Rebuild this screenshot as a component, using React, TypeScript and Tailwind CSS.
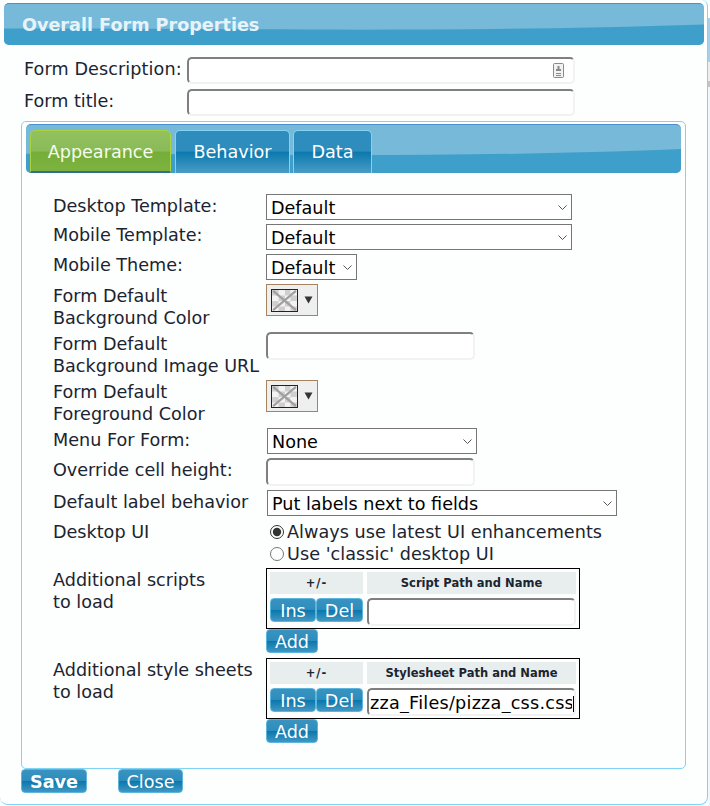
function Gloss() {
  // curved lower half of the glossy header
  return (
    <svg className="absolute inset-0 h-full w-full" viewBox="0 0 100 100" preserveAspectRatio="none">
      <path d="M0 60 C 30 58, 60 72, 100 50 L100 100 L0 100 Z" fill="#3f9fcb" />
    </svg>
  )
}

function TextBox({ className = "", value = "" }: { className?: string; value?: string }) {
  return (
    <input
      readOnly
      value={value}
      className={`rounded-[5px] border-2 border-t-[#7f7f7f] border-l-[#7f7f7f] border-r-[#f2f2f2] border-b-[#f2f2f2] bg-white pl-px pr-0.5 text-[17.6px] text-black outline-none ${className}`}
    />
  )
}

function Select({ value, className = "" }: { value: string; className?: string }) {
  return (
    <div className={`relative h-[26px] ${className}`}>
      <select className="h-full w-full appearance-none border border-[#767676] bg-white pl-[4px] text-[17.6px] text-black">
        <option>{value}</option>
      </select>
      <svg width="9" height="5" viewBox="0 0 9 5" className="pointer-events-none absolute top-[11px] right-[5px]">
        <path d="M0.5 0.5L4.5 4.5L8.5 0.5" fill="none" stroke="#555" />
      </svg>
    </div>
  )
}

function BlueButton({ children, className = "" }: { children: React.ReactNode; className?: string }) {
  return (
    <button className={`flex h-[24px] items-center justify-center rounded-[4px] border border-[#5bb5dc] bg-[linear-gradient(#3a93c0_0%,#2d8cbc_50%,#0a78ae_52%,#4197c2_100%)] pt-[4px] text-[17.6px] leading-none text-white ${className}`}>
      {children}
    </button>
  )
}

function Swatch() {
  return (
    <div className="flex h-[32px] w-[52px] items-center gap-[6px] border border-[#a5835f] bg-[#efefef] pl-[4px]">
      <svg width="27" height="23" viewBox="0 0 27 23" className="border border-[#222]">
        <rect width="27" height="23" fill="#f2f2f2" />
        <path d="M0 0h7v6H0zM14 0h6v6h-6zM7 6h7v6H7zM20 6h7v6h-7zM0 12h7v6H0zM14 12h6v6h-6zM7 18h7v5H7zM20 18h7v5h-7z" fill="#cfcfcf" />
        <path d="M1 1L26 22M26 1L1 22" stroke="#a0a0a0" strokeWidth="2.4" />
      </svg>
      <svg width="9" height="8" viewBox="0 0 9 8">
        <path d="M0.5 0.5h8L4.5 7.5z" fill="#333" />
      </svg>
    </div>
  )
}

function Row({ label, className = "", labelClass = "pt-px", children }: { label: React.ReactNode; className?: string; labelClass?: string; children: React.ReactNode }) {
  return (
    <div className={`flex ${className}`}>
      <div className={`w-[213px] shrink-0 whitespace-nowrap leading-[22px] ${labelClass}`}>{label}</div>
      <div className="min-w-0">{children}</div>
    </div>
  )
}

function PathTable({ heading, value, caret }: { heading: string; value?: string; caret?: boolean }) {
  return (
    <div className="w-[314px] border border-black px-[3px] pt-[3px]">
      <div className="flex gap-[4px]">
        <div className="flex h-[22px] w-[93px] items-center justify-center bg-[#e8eeee] pt-[2px] text-[11.5px] font-bold tracking-[1px]">+/-</div>
        <div className="flex h-[22px] w-[209px] items-center justify-center bg-[#e8eeee] pt-[2px] text-[11.5px] font-bold">{heading}</div>
      </div>
      <div className="mt-[4px] flex gap-[4px] pb-[2px]">
        <div className="flex w-[93px]">
          <BlueButton className="w-[46px]">Ins</BlueButton>
          <BlueButton className="w-[47px]">Del</BlueButton>
        </div>
        <div className="relative">
          <TextBox value={value} className="h-[28px] w-[209px] pt-px tracking-[0.25px]" />
          {caret && <div className="absolute top-[8px] right-[2px] h-[16px] w-px bg-black" />}
        </div>
      </div>
    </div>
  )
}

const tabBlue = "flex h-[43px] items-center justify-center rounded-t-[5px] border border-b-0 border-[#7fd4f5] bg-[linear-gradient(#2f8dbd_0%,#2f8dbd_48%,#0a78ae_50%,#4a9cc6_100%)] text-white"

export default function App() {
  return (
    <div className="flex h-[806px] w-[710px] overflow-hidden bg-[#fdfefe] font-['DejaVu_Sans',sans-serif] text-[17.6px] text-[#1b2430]">
      <div className="h-[805px] w-[708px] shrink-0 rounded-tr-[6px] rounded-b-[8px] border-r border-b border-[#7fd4f5] px-[4px] pt-[3px]">
        <div className="relative h-[42px] w-[700px] overflow-hidden rounded-[5px] border-t border-[#4a90d0] bg-[#76b9d9]">
          <Gloss />
          <div className="relative pl-[18px] pt-[10px] text-[17.6px] font-bold leading-[22px] text-[#e6f4fa]">Overall Form Properties</div>
        </div>

        <div className="mt-[12px] ml-[20px] flex">
          <div className="w-[163px] whitespace-nowrap pt-[1px] leading-[22px] tracking-[0.1px]">Form Description:</div>
          <div className="relative">
            <TextBox className="h-[27px] w-[388px]" />
            <svg width="11" height="15" viewBox="0 0 11 15" className="absolute top-[6px] right-[11px]">
              <rect x="0.5" y="0.5" width="10" height="14" rx="1" fill="#f2f2f2" stroke="#8a8a8a" />
              <path d="M4.5 3h2v3h1.5v2H3V6h1.5zM3 10h5v1H3zM3 12h5v1H3z" fill="#8a8a8a" />
            </svg>
          </div>
        </div>
        <div className="mt-[5px] ml-[20px] flex">
          <div className="w-[163px] pt-[1px] leading-[22px]">Form title:</div>
          <TextBox className="h-[27px] w-[388px]" />
        </div>

        <div className="mt-[5px] ml-[17px] h-[648px] w-[665px] rounded-[5px] border border-[#7fd4f5] px-[4px] pt-[2px]">
          <div className="relative h-[49px] overflow-hidden rounded-[5px] border-t border-[#4a90d0] bg-[#76b9d9]">
            <Gloss />
            <div className="relative flex gap-[4px] pl-[4px] pt-[5px] text-[17.6px]">
              <div className="flex h-[43px] w-[141px] items-center justify-center rounded-t-[5px] border border-b-2 border-[#a9d23f] border-b-[#2f6f8f] bg-[linear-gradient(#93c15f_0%,#8abb58_50%,#74ae38_53%,#7eb240_100%)] pt-[2px] text-[#f7fbef]">Appearance</div>
              <div className={`w-[115px] ${tabBlue}`}>Behavior</div>
              <div className={`-ml-[1px] w-[79px] ${tabBlue}`}>Data</div>
            </div>
          </div>

          <div className="flex flex-col pl-[27px] pt-[21px]">
            <Row label="Desktop Template:" className="h-[30px]"><Select value="Default" className="w-[306px]" /></Row>
            <Row label="Mobile Template:" className="h-[30px]" labelClass=""><Select value="Default" className="w-[306px]" /></Row>
            <Row label="Mobile Theme:" className="h-[30px]" labelClass=""><Select value="Default" className="w-[91px]" /></Row>
            <Row label={<>Form Default<br />Background Color</>} className="h-[48px]"><Swatch /></Row>
            <Row label={<>Form Default<br />Background Image URL</>} className="h-[48px]"><TextBox className="h-[28px] w-[209px]" /></Row>
            <Row label={<>Form Default<br />Foreground Color</>} className="h-[48px]"><Swatch /></Row>
            <Row label="Menu For Form:" className="h-[30px]"><Select value="None" className="ml-[1px] w-[210px]" /></Row>
            <Row label="Override cell height:" className="h-[32px]"><TextBox className="h-[28px] w-[209px]" /></Row>
            <Row label="Default label behavior" className="h-[32px]"><Select value="Put labels next to fields" className="ml-[1px] w-[350px]" /></Row>
            <Row label="Desktop UI" className="h-[46px]" labelClass="-mt-px">
              <div className="-mt-px flex flex-col pl-[4px] leading-[22px] tracking-[0.05px]">
                <label className="flex items-center gap-[3px]"><input type="radio" name="ui" defaultChecked className="m-0 h-[14px] w-[14px] accent-[#333]" />Always use latest UI enhancements</label>
                <label className="flex items-center gap-[3px]"><input type="radio" name="ui" className="m-0 h-[14px] w-[14px]" />Use 'classic' desktop UI</label>
              </div>
            </Row>
            <Row label={<>Additional scripts<br />to load</>} className="h-[90px]">
              <PathTable heading="Script Path and Name" />
              <BlueButton className="w-[52px]">Add</BlueButton>
            </Row>
            <Row label={<>Additional style sheets<br />to load</>}>
              <PathTable heading="Stylesheet Path and Name" value="zza_Files/pizza_css.css" caret />
              <BlueButton className="w-[52px]">Add</BlueButton>
            </Row>
          </div>
        </div>

        <div className="ml-[17px] flex gap-[31px]">
          <BlueButton className="w-[66px] font-bold">Save</BlueButton>
          <BlueButton className="w-[65px]">Close</BlueButton>
        </div>
      </div>

      {/* sliver of the page behind the dialog */}
      <div className="flex w-[2px] flex-col">
        <div className="h-[18px]" />
        <div className="h-[44px] bg-[#a8d0ea]" />
        <div className="h-[20px] bg-[#eeeeee]" />
        <div className="h-[6px] bg-[#c4c4c4]" />
        <div className="h-[724px] bg-[#eef8fd]" />
      </div>
    </div>
  )
}
